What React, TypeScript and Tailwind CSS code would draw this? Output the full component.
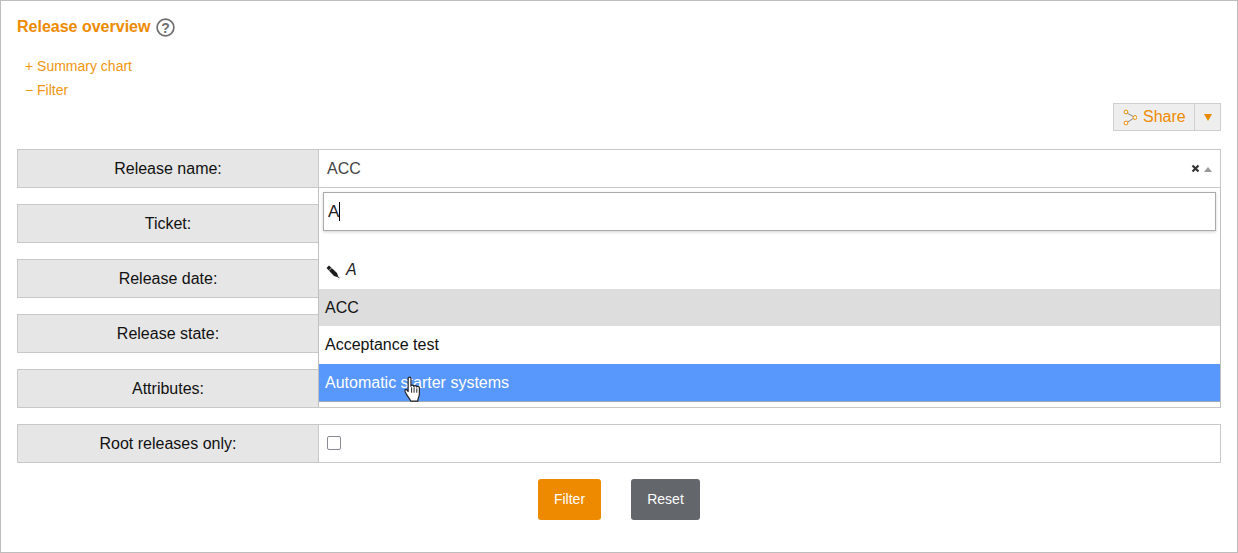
import React from "react";

const labels = ["Ticket:", "Release date:", "Release state:", "Attributes:"];

function Row({ label, children }: { label: string; children?: React.ReactNode }) {
  return (
    <div className="flex h-[39px] text-[16px]">
      <div className="w-[302px] shrink-0 flex items-center justify-center bg-[#e6e6e6] border border-[#c8c8c8] text-[#111]">
        {label}
      </div>
      <div className="relative flex-1 flex items-center border border-l-0 border-[#c8c8c8] bg-white">
        {children}
      </div>
    </div>
  );
}

function Hand() {
  return (
    <svg width="20" height="27" viewBox="0 0 18 25" className="absolute left-[84px] top-[12px]">
      <path
        d="M4.5 2.2c0-1.6 2.6-1.6 2.6 0v7.2c.4-1.3 2.6-1.2 2.7.3.5-1.2 2.5-1 2.6.5.6-1 2.4-.7 2.5.8v5.5c0 2.400-.6 3.500-1.400 5.200v1.500H7c-1.200-2.400-2.600-3.900-4-6.200-.9-1.500-1.800-3-1.500-3.800.4-1 1.700-.6 2.300.2l.7 1V2.200z"
        fill="#fff"
        stroke="#222"
        strokeWidth="1.100"
        strokeLinejoin="round"
      />
      <path d="M7.700 10.500v5M10 10.500v5M12.500 11.500v4" stroke="#222" strokeWidth="0.900" fill="none" />
    </svg>
  );
}

export default function App() {
  return (
    <div className="w-[1238px] h-[553px] bg-white border border-[#bdbdbd] font-['Liberation_Sans',Arial,sans-serif] px-[16px] overflow-hidden">
      <div className="flex items-center h-[20px] mt-[16px]">
        <span className="font-bold text-[16px] leading-[20px] text-[#ee8a00]">Release overview</span>
        <svg width="19" height="19" viewBox="0 0 19 19" className="ml-[5.500px]">
          <circle cx="9.500" cy="9.500" r="8.400" fill="none" stroke="#6e6e6e" strokeWidth="1.700" />
          <text x="9.500" y="14.500" textAnchor="middle" fontSize="14" fontWeight="700" fill="#6e6e6e" fontFamily="Liberation Sans">?</text>
        </svg>
      </div>
      <div className="mt-[17px] pl-[8px] text-[14px] leading-[24px] text-[#f0960f]">
        <div>+ Summary chart</div>
        <div>− Filter</div>
      </div>
      <div className="flex justify-end mt-[1px] h-[28px]">
        <div className="flex items-stretch h-[28px] w-[108px] bg-[#eeeeee] border border-[#cfcfcf]">
          <div className="flex items-center w-[81px] pl-[9px] border-r border-[#cfcfcf] text-[16px] text-[#ee8a00]">
            <svg width="14" height="17" viewBox="0 0 14 17" className="mr-[6px] shrink-0">
              <path d="M3 3.500L12 8.500L3 14" fill="none" stroke="#888" strokeWidth="1" />
              <circle cx="3" cy="3" r="1.900" fill="#fff" stroke="#ee8a00" strokeWidth="1" />
              <circle cx="12" cy="8.500" r="1.900" fill="#fff" stroke="#ee8a00" strokeWidth="1" />
              <circle cx="3" cy="14" r="1.900" fill="#fff" stroke="#ee8a00" strokeWidth="1" />
            </svg>
            Share
          </div>
          <div className="flex-1 flex items-center justify-center">
            <svg width="8" height="8" viewBox="0 0 8 8"><path d="M0 1H8L4 8Z" fill="#ee8a00" /></svg>
          </div>
        </div>
      </div>
      <div className="mt-[18px] flex flex-col gap-[16px]">
        <Row label="Release name:">
          <span className="pl-[8px] text-[#444]">ACC</span>
          <div className="absolute right-[8px] top-[14px] flex items-center gap-[4px]">
            <svg width="9" height="9" viewBox="0 0 9 9">
              <path d="M1.500 1.500L7.500 7.500M7.500 1.500L1.500 7.500" stroke="#333" strokeWidth="2.200" />
            </svg>
            <svg width="8" height="5" viewBox="0 0 8 5" className="mt-[1px]"><path d="M0 5L4 0L8 5Z" fill="#999" /></svg>
          </div>
          <div className="absolute z-10 -left-px -right-px top-[37px] h-[220px] bg-white border-x border-[#c0c0c0] border-t border-t-[#c8c8c8]">
            <div className="pt-[4px] px-[4px]">
              <div className="h-[39px] flex items-center pl-[4px] border border-[#aaaaaa] shadow-[0_1px_3px_rgba(0,0,0,0.18)] text-[17px] text-[#222] bg-white">
                A<span className="inline-block w-px h-[19px] bg-black" />
              </div>
            </div>
            <div className="h-[58px] flex items-end pb-[7px] pl-[7px] text-[#222]">
              <svg width="14" height="14" viewBox="0 0 14 14" className="mr-[6px] mb-[3px]">
                <path d="M0.500 3L3 0.500L11 8L12.500 12.500L8 11Z" fill="#1d1d1d" />
                <path d="M12 11.500L13 13L13.500 13" stroke="#555" strokeWidth="1" fill="none" />
                <path d="M3 5.500L5.500 3" stroke="#fff" strokeWidth="0.800" />
              </svg>
              <span className="italic">A</span>
            </div>
            <div className="h-[37px] flex items-center pl-[6px] bg-[#dddddd] text-[#111]">ACC</div>
            <div className="h-[38px] pb-[1px] flex items-center pl-[6px] text-[#111]">Acceptance test</div>
            <div className="relative h-[38px] flex items-center pl-[6px] bg-[#5897fb] text-white border-b border-b-[#9fa8b5]">
              Automatic starter systems
              <Hand />
            </div>
          </div>
        </Row>
        {labels.map((l) => (
          <Row key={l} label={l} />
        ))}
        <Row label="Root releases only:">
          <span className="ml-[8px] mb-[2px] w-[14px] h-[14px] rounded-[2px] border border-[#8a8a95] bg-white" />
        </Row>
      </div>
      <div className="flex justify-center mt-[16px] gap-[30px]">
        <button className="w-[63px] h-[41px] bg-[#ee8a00] rounded-[3px] text-white text-[14px]">Filter</button>
        <button className="w-[69px] h-[41px] bg-[#63666a] rounded-[3px] text-white text-[14px]">Reset</button>
      </div>
    </div>
  );
}
